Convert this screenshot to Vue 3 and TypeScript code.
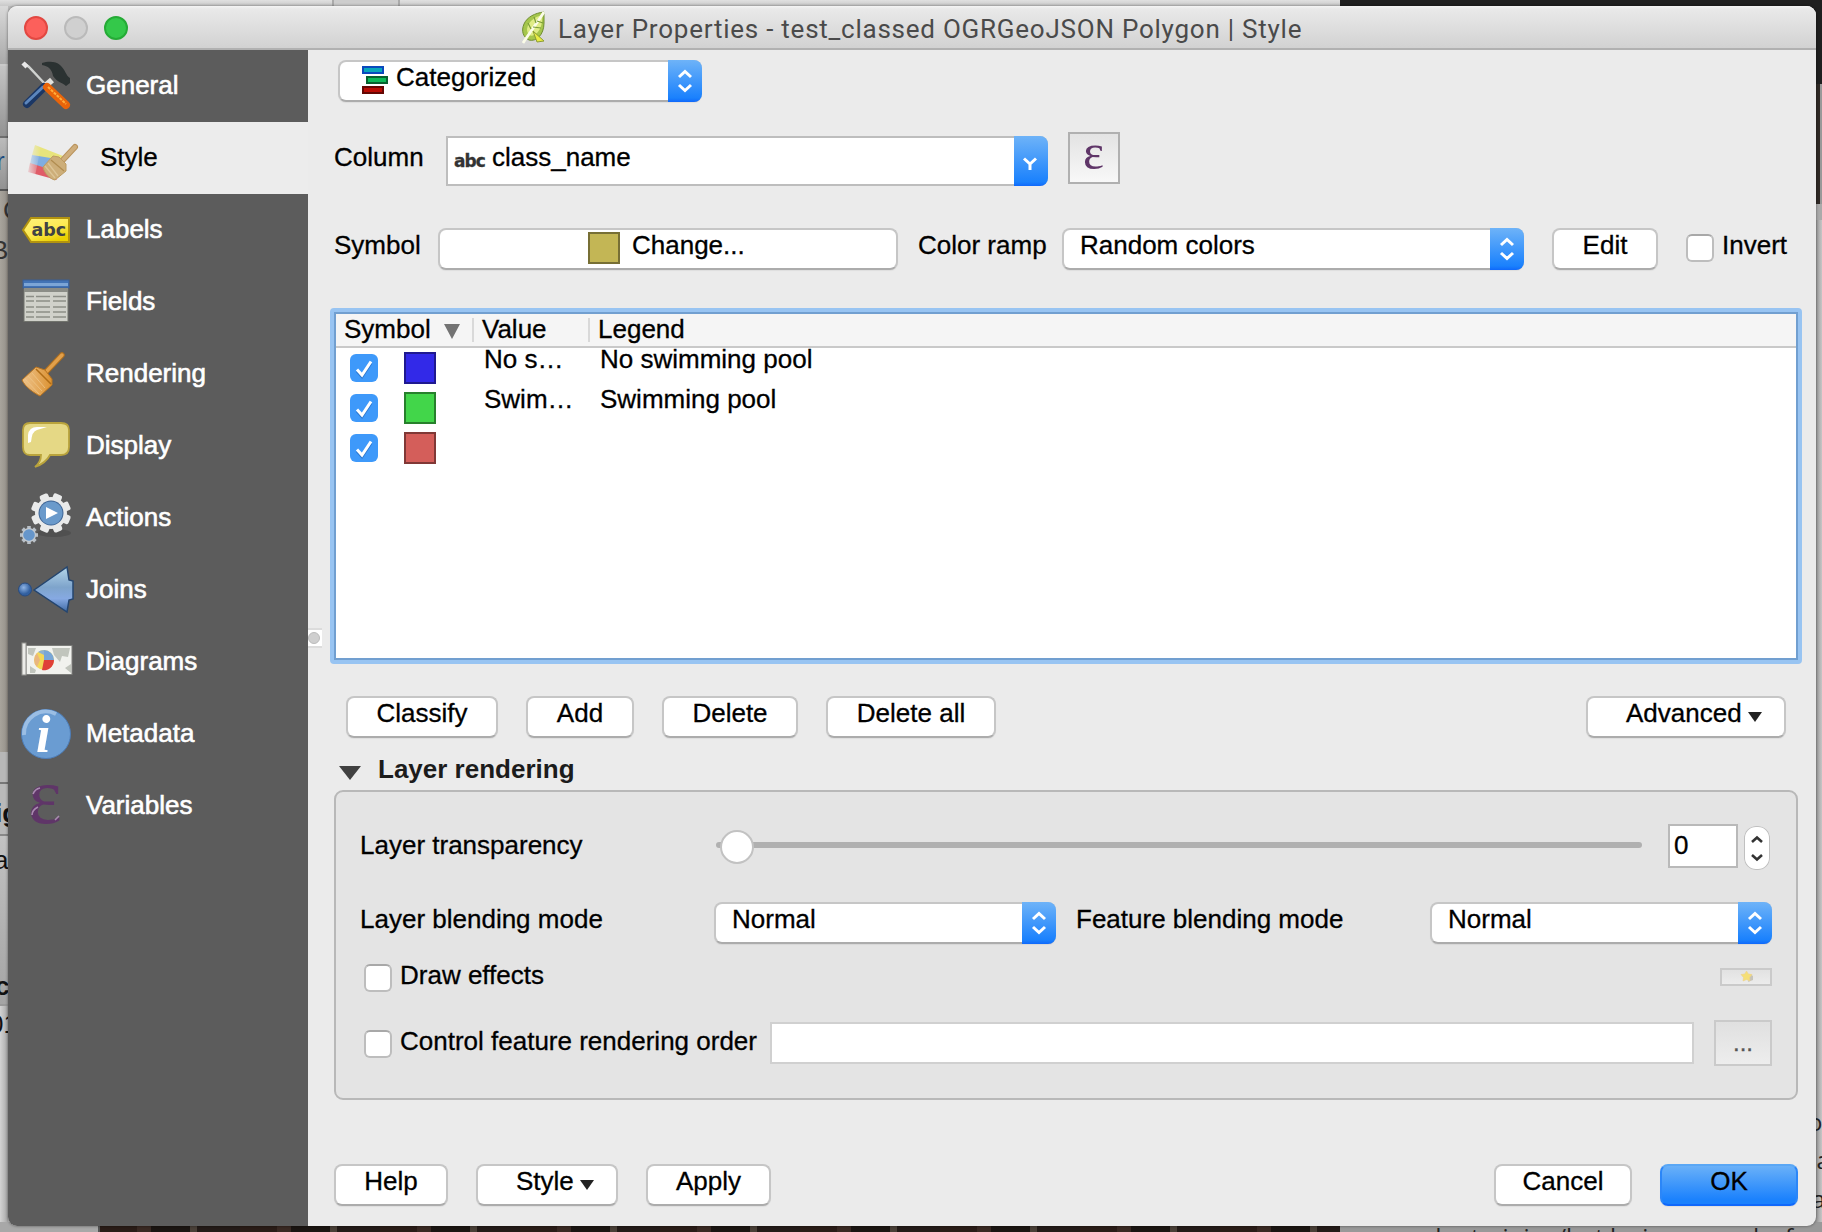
<script setup lang="ts">
import { ref } from 'vue'

interface NavItem { id: string; label: string }
interface Category { color: string; edge: string; value: string; legend: string }

const nav: NavItem[] = [
  { id: 'general', label: 'General' },
  { id: 'style', label: 'Style' },
  { id: 'labels', label: 'Labels' },
  { id: 'fields', label: 'Fields' },
  { id: 'rendering', label: 'Rendering' },
  { id: 'display', label: 'Display' },
  { id: 'actions', label: 'Actions' },
  { id: 'joins', label: 'Joins' },
  { id: 'diagrams', label: 'Diagrams' },
  { id: 'metadata', label: 'Metadata' },
  { id: 'variables', label: 'Variables' },
]
const active = ref('style')

const categories: Category[] = [
  { color: '#3229e8', edge: '#1f1990', value: 'No s…', legend: 'No swimming pool' },
  { color: '#42d64a', edge: '#27802c', value: 'Swim…', legend: 'Swimming pool' },
  { color: '#d45e5a', edge: '#803836', value: '', legend: '' },
]
const teeth = [0, 45, 90, 135, 180, 225, 270, 315]
</script>

<template>
  <div class="desktop">
    <div class="backdrop">
      <div class="bg-left">
        <i class="l1"></i><i class="l2"></i><i class="l3"></i><i class="l4"></i><i class="l5"></i><i class="l6"></i><i class="l7"></i><i class="l8"></i>
      </div>
      <div class="bg-top"></div>
      <div class="bg-right"><i class="r1"></i><i class="r2"></i><i class="r3"></i><i class="r4"></i></div>
      <div class="bg-bottom"><i class="b1"></i><i class="b2"></i><i class="b3"></i></div>
      <svg class="bg-text" width="1822" height="1232" viewBox="0 0 1822 1232">
        <g font-family="Liberation Sans, sans-serif" font-size="26" fill="#111">
          <text x="-4" y="170" fill="#1a4a80">r</text>
          <text x="3" y="219" fill="#333">C</text>
          <text x="-9" y="259" fill="#333">B</text>
          <text x="-5" y="822" font-weight="700">ig</text>
          <text x="-6" y="869">a</text>
          <text x="-5" y="995" font-weight="700">c</text>
          <text x="-11" y="1033">01</text>
        </g>
        <g font-family="Open Sans, sans-serif" font-size="24" fill="#222">
          <text x="1808" y="1131">o</text>
          <text x="1802" y="1169">oa</text>
          <text x="1812" y="1208">a</text>
          <text x="1412" y="1246">uder training/hot lusing an and a f</text>
        </g>
      </svg>
    </div>

    <div class="window">
      <header class="titlebar">
        <div class="lights"><i class="red"></i><i class="gray"></i><i class="green"></i></div>
        <svg class="logo" width="28" height="34" viewBox="0 0 28 34">
          <path d="M24 1C15 2 7 6 4 13C1 20 3 26 9 29C16 31 24 24 24 12Z" fill="#a5c64c" stroke="#6f8d30" stroke-width="1" />
          <path d="M22 4C14 6 8 11 7 18C7 23 10 26 14 24C20 21 23 13 22 4Z" fill="#dfec86" />
          <path d="M24 1C19 9 11 20 3 32" stroke="#fbfce8" stroke-width="2.8" fill="none" />
          <path d="M13 20L24 30L17 31Z" fill="#e9ec44" stroke="#8c9c34" stroke-width="1" />
          <path d="M17 10L23 12M13 16L21 17M16 12L14 6M11 18L8 12" stroke="#7a9c38" stroke-width="1.2" />
        </svg>
        <span class="title">Layer Properties - test_classed OGRGeoJSON Polygon | Style</span>
      </header>

      <div class="body">
        <nav class="sidebar">
          <div v-for="n in nav" :key="n.id" class="item" :class="{ active: n.id === active }">
            <svg class="ico" width="64" height="72" viewBox="0 0 64 72">
              <template v-if="n.id === 'general'">
                <path d="M8 13L13 17L29 34" stroke="#d0d2d0" stroke-width="2.4" fill="none" />
                <path d="M7 13L11 17" stroke="#e8e8e8" stroke-width="4.5" />
                <path d="M36 30L28 37" stroke="#e2e2de" stroke-width="6" />
                <path d="M28 37L11 54" stroke="#1b3765" stroke-width="8" stroke-linecap="round" />
                <path d="M27 37L10 53" stroke="#5c86bd" stroke-width="3" stroke-linecap="round" />
                <path d="M31 37L50 55" stroke="#e8640a" stroke-width="8" stroke-linecap="round" />
                <path d="M32 37L50 54" stroke="#ffac3a" stroke-width="2" stroke-dasharray="3 1" />
                <path d="M26 13C32 11 40 11 44 15C49 19 50 26 54 28V33L50 36C46 32 42 33 37 26C36 19 32 16 26 15Z" fill="#2b3232" />
              </template>
              <template v-else-if="n.id === 'style'">
                <path d="M20 23L48 34L42 42L17 33Z" fill="#e8e47c" />
                <path d="M17 33L42 37L36 48L15 42Z" fill="#7fade0" />
                <path d="M15 41L34 47L42 58L13 50Z" fill="#e05c68" />
                <path d="M13 20L26 25L20 54L10 50Z" fill="url(#fadeEdge)" />
                <path d="M60 25L46 40" stroke="#b9935c" stroke-width="6" stroke-linecap="round" />
                <path d="M60 25L46 40" stroke="#cfae7c" stroke-width="4" stroke-linecap="round" />
                <path d="M38 34L44 35L51 42V49L40 58C35 57 29 51 28 45Z" fill="#cdae79" stroke="#bd9b62" />
                <path d="M36 38L49 49" stroke="#b08c50" stroke-width="1.2" />
                <path d="M33 41L43 54M30 44L40 56" stroke="#dcc496" stroke-width="1.3" />
              </template>
              <template v-else-if="n.id === 'labels'">
                <path d="M7 36L15 24H53V48H15Z" fill="url(#yl)" stroke="#b29310" stroke-width="2" />
                <text x="15.500" y="42" font-family="DejaVu Sans, sans-serif" font-weight="700" font-size="17.500" fill="#404244">abc</text>
              </template>
              <template v-else-if="n.id === 'fields'">
                <rect x="8" y="15" width="44" height="40.500" fill="#d0d1ca" stroke="#71736d" />
                <rect x="7" y="14" width="46" height="8" fill="#4273b5" stroke="#3a5f93" />
                <rect x="8" y="17" width="44" height="3" fill="#7ca5d6" />
                <rect x="8" y="22" width="44" height="4" fill="#8b8d87" />
                <path d="M10 30.500H50M10 35H50M10 41H50M10 46H50M10 51H50" stroke="#8c8e87" stroke-width="1.600" stroke-dasharray="8 2 14 3 14 9" />
              </template>
              <template v-else-if="n.id === 'rendering'">
                <path d="M46 17L30 34" stroke="#b06f1e" stroke-width="5.500" stroke-linecap="round" />
                <path d="M46 17L30 34" stroke="#e2a04a" stroke-width="3.500" stroke-linecap="round" />
                <path d="M20 29L29 32L36 41V47L24 58C18 55 9 49 6 42Z" fill="url(#br)" stroke="#b87420" />
                <path d="M20 31L35 46" stroke="#b06d16" stroke-width="1.500" />
                <path d="M12 38L26 53M16 35L29 50M9 41L23 56" stroke="#efc588" stroke-width=".8" />
              </template>
              <template v-else-if="n.id === 'display'">
                <path d="M14 13H45Q53 13 53 20V37Q53 45 45 45H34Q30 53 19 57Q25 52 25 45H14Q7 45 7 37V20Q7 13 14 13Z" fill="#e5d885" stroke="#b9a33c" stroke-width="1.800" />
                <path d="M12 33V25Q13 17 21 17H31L21 20Q16 21 15 32Z" fill="#fff" />
              </template>
              <template v-else-if="n.id === 'actions'">
                <g transform="translate(35 31)">
                  <ellipse cx="3" cy="20" rx="17" ry="4" fill="#505050" />
                  <rect v-for="t in teeth" :key="t" x="-4.500" y="-20" width="9" height="10" rx="2" fill="#e9eaea" :transform="`rotate(${t + 22})`" />
                  <circle r="16" fill="#e9eaea" /><circle r="12.500" fill="#3f6595" /><circle r="11.500" fill="#6a9acb" />
                  <path d="M-5 -6L7 0L-5 6Z" fill="#fff" />
                </g>
                <g transform="translate(13 53)">
                  <rect v-for="t in teeth" :key="t" x="-1.800" y="-9" width="3.600" height="5" fill="#b9c0c8" :transform="`rotate(${t})`" />
                  <circle r="7" fill="#c4cad0" /><circle r="5.800" fill="#6696cb" />
                </g>
              </template>
              <template v-else-if="n.id === 'joins'">
                <circle cx="9" cy="35.500" r="6.500" fill="url(#ball)" stroke="#294c80" />
                <path d="M18 36L51 13L53 26L57 27V45L53 46L51 58Z" fill="url(#jb)" stroke="#24456f" stroke-width="1.500" />
              </template>
              <template v-else-if="n.id === 'diagrams'">
                <rect x="10" y="19.500" width="46" height="29" fill="#f1f2ee" stroke="#7c7d7a" />
                <path d="M12 22H20L17 30L12 28ZM36 22H54L52 31L46 30L44 36L38 29ZM14 40L20 44L19 47H14ZM49 42L55 38V47Z" fill="#c1c5bd" />
                <rect x="6" y="17" width="4" height="32" fill="#ecece9" stroke="#93938f" />
                <circle cx="28" cy="34" r="10" fill="#f3d857" />
                <path d="M28 34V24A10 10 0 0 1 38 34Z" fill="#78a6d7" />
                <path d="M22 26A10 10 0 0 1 28 24V29Z" fill="#8fb2cf" />
                <path d="M28 34H38A10 10 0 0 1 26 44Z" fill="#df4038" />
                <path d="M21 27A10 10 0 0 0 21 41L24 34Z" fill="#e9b67f" />
              </template>
              <template v-else-if="n.id === 'metadata'">
                <circle cx="30" cy="36" r="24.500" fill="#6a9cd2" stroke="#4d7db8" />
                <path d="M8 37A22 22 0 0 1 40 16" stroke="#9bbee4" stroke-width="4" fill="none" />
                <text x="20" y="54" font-family="Liberation Serif, serif" font-weight="700" font-style="italic" font-size="52" fill="#fff">i</text>
              </template>
              <template v-else>
                <text x="12" y="53" font-family="Liberation Serif, serif" font-size="80" fill="#5f3568">ε</text>
                <path d="M17 24Q19 19 24 18M16 45Q16 40 22 37M39 50L43 46" stroke="#a98bb0" stroke-width="1.600" fill="none" />
              </template>
              <defs>
                <linearGradient id="fadeEdge"><stop offset="0" stop-color="#ececec" /><stop offset="1" stop-color="#ececec" stop-opacity="0" /></linearGradient>
                <linearGradient id="yl" x2=".6" y2="1"><stop offset="0" stop-color="#fff27e" /><stop offset=".6" stop-color="#fdea52" /><stop offset="1" stop-color="#ead000" /></linearGradient>
                <linearGradient id="br"><stop offset="0" stop-color="#edc38c" /><stop offset="1" stop-color="#dc9231" /></linearGradient>
                <linearGradient id="jb" x2="0" y2="1"><stop offset="0" stop-color="#b4d6ea" /><stop offset=".45" stop-color="#7ea4cb" /><stop offset=".7" stop-color="#86a9e2" /><stop offset="1" stop-color="#3e6aa4" /></linearGradient>
                <radialGradient id="ball" cx=".4" cy=".35"><stop offset="0" stop-color="#8fb4e4" /><stop offset="1" stop-color="#315f9f" /></radialGradient>
              </defs>
            </svg>
            <span>{{ n.label }}</span>
          </div>
        </nav>
        <div class="splitter"><i></i></div>

        <main class="content">
          <div class="combo renderer">
            <div class="val">
              <svg width="26" height="28" viewBox="0 0 26 28">
                <rect x="1" y="1" width="20" height="6" fill="#08a7bc" stroke="#0a49bd" stroke-width="2" />
                <rect x="5" y="11" width="20" height="6" fill="#0bb957" stroke="#07612f" stroke-width="2" />
                <rect x="1" y="21" width="20" height="6" fill="#b90b04" stroke="#640703" stroke-width="2" />
              </svg>
              <span>Categorized</span>
            </div>
            <div class="arrows"><svg width="34" height="42" viewBox="0 0 34 42"><path d="M11 17L17 11.500L23 17M11 25L17 30.500L23 25" /></svg></div>
          </div>

          <div class="row column-row">
            <label class="lab">Column</label>
            <div class="field-combo">
              <b>abc</b><span>class_name</span>
              <div class="drop"><svg width="34" height="50" viewBox="0 0 34 50"><path d="M10 22.500L16 28L22 22.500M16 27V34" /></svg></div>
            </div>
            <div class="eps"><svg width="48" height="48" viewBox="0 0 48 48"><text x="13" y="35" font-family="Liberation Serif, serif" font-size="50" fill="#5f3568">ε</text></svg></div>
          </div>

          <div class="row symbol-row">
            <label class="lab">Symbol</label>
            <div class="btn change"><i></i><span>Change...</span></div>
            <label class="ramp-lab">Color ramp</label>
            <div class="combo ramp"><div class="val">Random colors</div><div class="arrows"><svg width="34" height="42" viewBox="0 0 34 42"><path d="M11 17L17 11.500L23 17M11 25L17 30.500L23 25" /></svg></div></div>
            <div class="btn edit">Edit</div>
            <i class="check"></i>
            <span class="inv">Invert</span>
          </div>

          <section class="table">
            <div class="thead">
              <div class="c1">Symbol<svg width="16" height="15" viewBox="0 0 16 15"><path d="M0 0H16L8 15Z" fill="#737373" /></svg></div>
              <div class="c2">Value</div>
              <div class="c3">Legend</div>
            </div>
            <div v-for="(c, k) in categories" :key="k" class="trow">
              <div class="on"><svg width="28" height="28" viewBox="0 0 28 28"><path d="M7 15.500L12 21L21 7.500" fill="none" stroke="#2a76cf" stroke-width="3" transform="translate(0 1.500)" /><path d="M7 15.500L12 21L21 7.500" fill="none" stroke="#fff" stroke-width="3" /></svg></div>
              <div class="swatch" :style="{ background: c.color, borderColor: c.edge }"></div>
              <div class="v">{{ c.value }}</div>
              <div class="g">{{ c.legend }}</div>
            </div>
          </section>

          <div class="row actions">
            <div class="btn w151">Classify</div>
            <div class="btn w107">Add</div>
            <div class="btn w135">Delete</div>
            <div class="btn w169">Delete all</div>
            <div class="btn adv">Advanced<svg width="14" height="10" viewBox="0 0 14 10"><path d="M0 0H14L7 10Z" fill="#222" /></svg></div>
          </div>

          <div class="group-title">
            <svg width="22" height="14" viewBox="0 0 22 14"><path d="M0 0H22L11 14Z" fill="#404040" /></svg>
            <span>Layer rendering</span>
          </div>

          <section class="group">
            <div class="row transparency">
              <label>Layer transparency</label>
              <div class="slider"><i></i></div>
              <div class="num">0</div>
              <div class="step"><svg width="26" height="44" viewBox="0 0 26 44"><path d="M8 16L13 11.500L18 16M8 29L13 33.500L18 29" fill="none" stroke="#333" stroke-width="2.600" /></svg></div>
            </div>
            <div class="row blending">
              <label class="bl1">Layer blending mode</label>
              <div class="combo w342"><div class="val">Normal</div><div class="arrows"><svg width="34" height="42" viewBox="0 0 34 42"><path d="M11 17L17 11.500L23 17M11 25L17 30.500L23 25" /></svg></div></div>
              <label class="bl2">Feature blending mode</label>
              <div class="combo w342"><div class="val">Normal</div><div class="arrows"><svg width="34" height="42" viewBox="0 0 34 42"><path d="M11 17L17 11.500L23 17M11 25L17 30.500L23 25" /></svg></div></div>
            </div>
            <div class="row effects">
              <i class="check"></i>
              <span>Draw effects</span>
              <div class="star"><svg width="14" height="14" viewBox="0 0 14 14"><path d="M10 4L13 6V10L8 12Z" fill="#c6c4bb" /><path d="M6.500 1L8.300 4L12 4.500L9.600 7.500L10 11L6.500 9.600L3 11L3.500 7.500L1 4.500L4.800 4Z" fill="#f5df77" stroke="#efd28a" stroke-width=".6" /></svg></div>
            </div>
            <div class="row order">
              <i class="check"></i>
              <span>Control feature rendering order</span>
              <div class="line"></div>
              <div class="dots">...</div>
            </div>
          </section>

          <footer class="row footer">
            <div class="btn help">Help</div>
            <div class="btn style">Style<svg width="14" height="10" viewBox="0 0 14 10"><path d="M0 0H14L7 10Z" fill="#222" /></svg></div>
            <div class="btn apply">Apply</div>
            <div class="btn cancel">Cancel</div>
            <div class="btn ok">OK</div>
          </footer>
        </main>
      </div>
    </div>
  </div>
</template>

<style>
body { margin: 0; overflow: hidden; }
</style>

<style scoped>
* { box-sizing: border-box; }
.desktop { position: relative; width: 1822px; height: 1232px; overflow: hidden; background: #bdbdbd; padding: 6px 6px 6px 8px; font-family: "Liberation Sans", Arial, sans-serif; font-size: 26px; line-height: 34px; color: #000; white-space: nowrap; -webkit-text-stroke: .3px; }
i { font-style: normal; display: block; flex: none; }
svg { display: block; flex: none; }
.backdrop { position: absolute; inset: 0; -webkit-text-stroke: 0; }
.bg-text { position: absolute; inset: 0; }
.bg-left { position: absolute; left: 0; top: 0; width: 8px; height: 1232px; display: flex; flex-direction: column; }
.l1 { height: 66px; background: linear-gradient(#dedede, #a9a9a9); border-bottom: 2px solid #c9c9c9; }
.l2 { height: 72px; background: linear-gradient(#c4c4c4, #939393); border-bottom: 2px solid #6e6e6e; }
.l3 { height: 53px; background: linear-gradient(#bbb, #929292); border-bottom: 2px solid #555; }
.l4 { height: 561px; background: linear-gradient(90deg, #a8a49c, #948f88); }
.l5 { height: 32px; background: #b7b7b7; border-bottom: 2px solid #777; }
.l6 { height: 52px; background: #b9b9b9; border-bottom: 2px solid #888; }
.l7 { height: 170px; background: linear-gradient(#c2c2c2, #a4a4a4); border-bottom: 2px solid #999; }
.l8 { flex: 1; background: linear-gradient(90deg, #d3d3d3, #a6a6a6); }
.bg-top { position: absolute; left: 0; top: 0; width: 1822px; height: 6px; background: linear-gradient(90deg, transparent 1340px, #202020 1340px), linear-gradient(90deg, transparent 332px, #aaa 332px 334px, #cdcdcd 334px 398px, #aaa 398px 400px, transparent 400px), linear-gradient(#e0e0e0, #c9c9c9); }
.bg-right { position: absolute; right: 0; top: 0; width: 12px; height: 1232px; display: flex; flex-direction: column; }
.r1 { height: 84px; background: #1f1f1f; }
.r2 { height: 120px; background: linear-gradient(90deg, #2f2925 10px, #999 10px); }
.r3 { height: 16px; background: #aaa; }
.r4 { flex: 1; background: linear-gradient(90deg, #999 6px, #c6c6c6); }
.bg-bottom { position: absolute; left: 0; bottom: 0; width: 1822px; height: 10px; display: flex; }
.b1 { width: 100px; background: #a8a8a8; border-right: 2px solid #555; }
.b2 { width: 1240px; background: repeating-linear-gradient(90deg, #2a1c17 0 37px, #3a2923 37px 51px, #1b1512 51px 90px, #4a4038 90px 97px, #241b18 97px 140px); }
.b3 { flex: 1; background: #999; }

.window { position: relative; width: 1808px; height: 1220px; border-radius: 9px; overflow: hidden; background: #ebebeb; display: flex; flex-direction: column; }
.desktop .window { box-shadow: 0 0 3px rgba(0, 0, 0, .5); }
.titlebar { height: 44px; flex: none; display: flex; background: linear-gradient(#f4f4f4 0, #e9e9e9 3px, #d2d2d2 42px); border-bottom: 2px solid #b1b1b1; }
.lights { display: flex; gap: 16px; padding: 10px 0 0 16px; width: 512px; }
.lights i { width: 24px; height: 24px; border-radius: 50%; border: 2px solid; }
.red { background: #fc605b; border-color: #e24842 !important; }
.gray { background: #d0d0d0; border-color: #bababa !important; }
.green { background: #34c84a; border-color: #25ab36 !important; }
.logo { margin: 5px 10px 0 0; }
.title { font-family: Roboto, sans-serif; font-size: 26px; line-height: 40px; color: #4a4a4a; margin-top: 3px; letter-spacing: .76px; -webkit-text-stroke: 0; }
.body { display: flex; flex: 1; }
.sidebar { width: 300px; flex: none; background: #5c5c5c; color: #fff; }
.item { height: 72px; display: flex; line-height: 70px; -webkit-text-stroke: .6px; }
.item .ico { margin: 0 6px 0 8px; -webkit-text-stroke: 0; }
.item.active { background: #ececec; color: #000; -webkit-text-stroke: .3px; }
.item.active .ico { margin-left: 7px; margin-right: 7px; }
.item.active span { margin-left: 14px; }
.splitter { width: 14px; height: 20px; margin-top: 578px; background: #fff; border: 2px solid #dcdcdc; border-width: 2px 0; flex: none; display: flex; align-items: center; }
.splitter i { width: 12px; height: 12px; border-radius: 50%; background: #cfcfcf; border: 1px solid #bbb; }
.content { width: 1476px; margin-left: 4px; padding-left: 8px; flex: none; display: flex; flex-direction: column; }
.row { display: flex; align-items: flex-start; flex: none; }

.btn, .combo { height: 42px; background: #fff; border: 2px solid #c6c6c6; border-bottom-color: #acacac; border-radius: 8px; line-height: 30px; flex: none; box-shadow: 0 1px 1px rgba(0, 0, 0, .06); }
.btn { text-align: center; }
.combo { display: flex; position: relative; padding-left: 16px; }
.combo .val { flex: 1; display: flex; }
.arrows { width: 34px; height: 42px; margin: -2px; border-radius: 0 8px 8px 0; background: linear-gradient(#6eb3f8, #1a81fd 38px, #0f68fb); flex: none; }
.arrows path, .drop path { fill: none; stroke: #fff; stroke-width: 3; }
.renderer { width: 364px; margin: 10px 0 0 4px; padding-left: 22px; }
.renderer svg { margin-top: 4px; }
.renderer .arrows svg { margin: 0; }
.renderer .val span { margin-left: 8px; }

.column-row { margin-top: 30px; height: 54px; }
.column-row .lab { margin-top: 8px; width: 112px; }
.field-combo { width: 602px; height: 50px; margin-top: 4px; background: #fff; border: 2px solid #bdbdbd; border-radius: 0 8px 8px 0; display: flex; line-height: 38px; padding-left: 6px; }
.field-combo b { font: 700 17px/46px "DejaVu Sans", sans-serif; color: #333; width: 38px; letter-spacing: -1px; }
.field-combo span { flex: 1; }
.drop { width: 34px; height: 50px; margin: -2px; border-radius: 0 8px 8px 0; background: linear-gradient(#6eb3f8, #1a81fd 46px, #0f68fb); }
.eps { width: 52px; height: 52px; margin-left: 20px; border: 2px solid #b0b0b0; background: linear-gradient(#e3e3e3, #f8f8f8); }

.symbol-row { margin-top: 42px; height: 42px; }
.symbol-row .lab { width: 104px; }
.change { width: 460px; display: flex; padding-left: 148px; }
.change i { width: 32px; height: 32px; margin-top: 2px; background: #c3b655; border: 2px solid #776f35; }
.change span { margin-left: 12px; }
.ramp-lab { margin-left: 20px; width: 144px; }
.ramp { width: 462px; }
.edit { width: 106px; margin-left: 28px; }
.check { width: 28px; height: 28px; border: 2px solid #bdbdbd; border-top-color: #a8a8a8; border-radius: 6px; background: #fff; }
.symbol-row .check { margin: 6px 0 0 28px; }
.inv { margin-left: 8px; }

.table { width: 1472px; height: 356px; margin: 38px 0 0 -4px; border: 4px solid #98c4f2; border-radius: 4px; box-shadow: inset 0 0 0 2px #719fd0; background: #fff; padding: 2px; flex: none; }
.thead { height: 34px; background: #f5f5f5; border-bottom: 2px solid #c9c9c9; display: flex; line-height: 30px; }
.c1 { width: 136px; padding-left: 8px; display: flex; }
.c1 svg { margin: 10px 0 0 13px; }
.c2, .c3 { position: relative; padding-left: 10px; }
.c2 { width: 116px; }
.c2::before, .c3::before { content: ""; position: absolute; left: 0; top: 4px; width: 2px; height: 24px; background: #d9d9d9; }
.trow { height: 40px; display: flex; line-height: 22px; }
.on { width: 28px; height: 28px; margin: 6px 0 0 14px; border-radius: 6px; background: #3e99fa; }
.swatch { width: 32px; height: 32px; border: 2px solid; margin: 4px 0 0 26px; }
.v { width: 116px; margin-left: 48px; }

.actions { margin: 32px 0 0 12px; height: 42px; }
.w151 { width: 152px; margin-right: 28px; }
.w107 { width: 108px; margin-right: 28px; }
.w135 { width: 136px; margin-right: 28px; }
.w169 { width: 170px; }
.adv { width: 200px; margin-left: 590px; display: flex; padding-left: 38px; }
.adv svg, .style svg { margin: 14px 0 0 6px; }
.group-title { height: 34px; margin: 14px 0 0 5px; display: flex; font-weight: 700; flex: none; color: #1c1c1c; -webkit-text-stroke: 0; }
.group-title svg { margin-top: 14px; }
.group-title span { margin-left: 17px; }

.group { width: 1464px; height: 310px; margin-top: 4px; border: 2px solid #b8b8b8; border-radius: 9px; background: #e4e4e4; padding: 32px 24px 0 24px; flex: none; }
.transparency { height: 46px; }
.transparency label { width: 356px; margin-top: 4px; }
.slider { width: 926px; height: 6px; margin-top: 18px; border-radius: 3px; background: #b0b0b0; position: relative; }
.slider i { position: absolute; left: 4px; top: -12px; width: 34px; height: 34px; border-radius: 50%; background: #fff; border: 2px solid #c2c2c2; }
.num { width: 70px; height: 44px; margin-left: 26px; border: 2px solid #b9b9b9; background: #fff; padding-left: 4px; line-height: 38px; }
.step { width: 26px; height: 44px; margin: 2px 0 0 6px; border-radius: 12px; background: #fff; box-shadow: 0 0 0 1px #c0c0c0 inset; }
.blending { height: 42px; margin-top: 32px; }
.bl1 { width: 354px; }
.w342 { width: 342px; }
.bl2 { width: 354px; margin-left: 20px; }
.effects { margin-top: 14px; height: 34px; }
.effects .check, .order .check { margin: 6px 8px 0 4px; }
.star { width: 52px; height: 18px; margin: 10px 0 0 auto; border: 2px solid #cacaca; background: linear-gradient(#e2e2e2, #ececec); padding-left: 18px; }
.order { margin-top: 28px; height: 46px; }
.order .check { margin-top: 10px; }
.order span { margin-top: 4px; width: 370px; }
.line { width: 924px; height: 42px; margin-top: 2px; border: 2px solid #d0d0d0; background: #fff; }
.dots { width: 58px; height: 46px; margin-left: 20px; border: 2px solid #cacaca; background: linear-gradient(#e0e0e0, #ededed); text-align: center; line-height: 42px; font-size: 24px; color: #555; }

.footer { margin-top: 64px; height: 42px; }
.help { width: 114px; }
.style { width: 142px; margin-left: 28px; display: flex; padding-left: 38px; }
.apply { width: 125px; margin-left: 28px; }
.cancel { width: 138px; margin-left: 723px; }
.ok { width: 138px; margin-left: 28px; background: linear-gradient(#6eb3f8, #1a81fd 36px); border-color: #5aa7f5 #2b86f8 #0f68fb; background-origin: border-box; }
</style>
